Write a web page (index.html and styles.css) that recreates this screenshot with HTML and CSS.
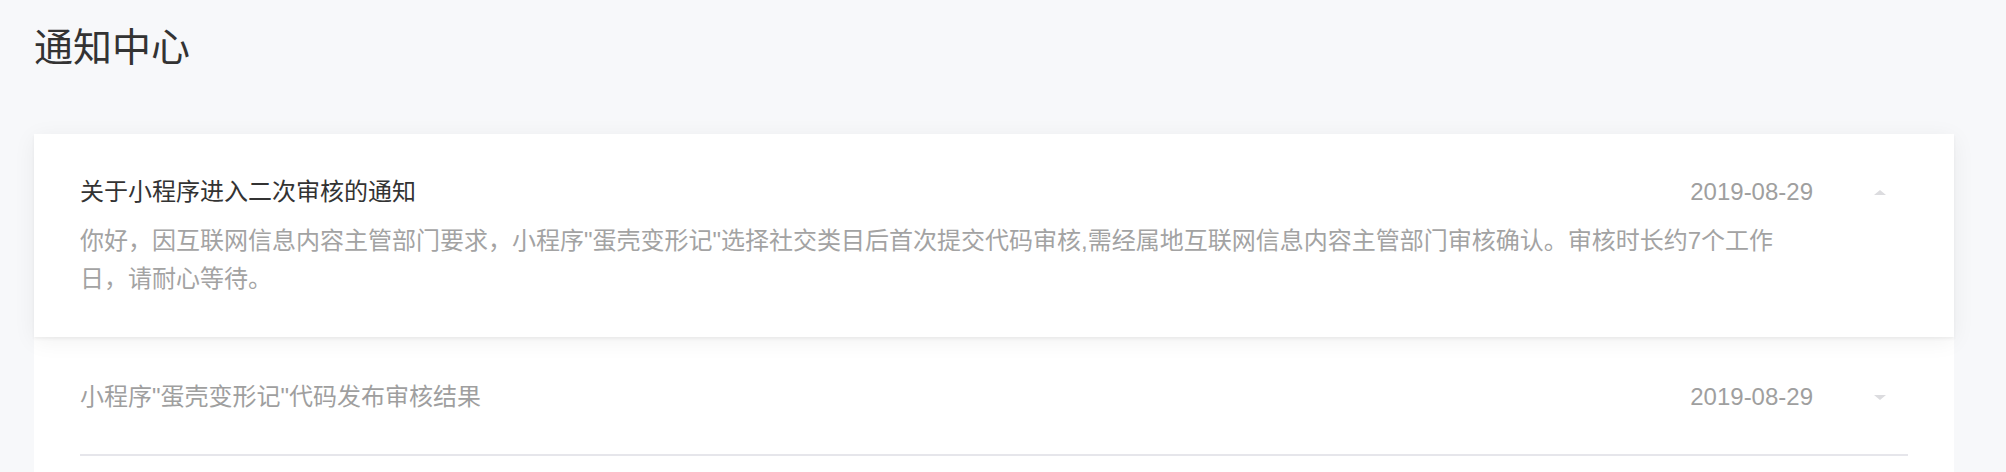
FILE: index.html
```html
<!DOCTYPE html>
<html lang="zh-CN">
<head>
    <meta charset="UTF-8">
    <meta name="viewport" content="width=device-width, initial-scale=1.0">
    <title>通知中心</title>
    <link rel="stylesheet" href="styles.css">
</head>
<body>

<div class="page">
    <h1 class="page-title">通知中心</h1>

    <div class="notice-list">
        <div class="notice open">
            <div class="notice-head">
                <span class="notice-title">关于小程序进入二次审核的通知</span>
                <span class="notice-date">2019-08-29</span>
                <span class="notice-arrow"><i class="arrow up"></i></span>
            </div>
            <p class="notice-body">你好，因互联网信息内容主管部门要求，小程序"蛋壳变形记"选择社交类目后首次提交代码审核,需经属地互联网信息内容主管部门审核确认。审核时长约7个工作日，请耐心等待。</p>
        </div>

        <div class="notice">
            <div class="notice-head">
                <span class="notice-title">小程序"蛋壳变形记"代码发布审核结果</span>
                <span class="notice-date">2019-08-29</span>
                <span class="notice-arrow"><i class="arrow down"></i></span>
            </div>
        </div>
    </div>
</div>

</body>
</html>
```

FILE: styles.css
```css
* {
    margin: 0;
    padding: 0;
    box-sizing: border-box;
}

html, body {
    height: 100%;
    overflow: hidden;
}

body {
    background-color: #f7f8fa;
    font-family: "Liberation Sans", "Noto Sans CJK SC", sans-serif;
    color: #333;
}

.page {
    padding: 20px 52px 0 34px;
}

.page-title {
    font-size: 39px;
    font-weight: normal;
    line-height: 55px;
    color: #333;
    margin-bottom: 59px;
}

.notice-list {
    background-color: white;
    padding-bottom: 60px;
}

.notice {
    padding: 0 46px;
    background-color: white;
}

.notice.open {
    position: relative;
    z-index: 1;
    padding-top: 41px;
    padding-bottom: 39px;
    box-shadow: 0 2px 3px rgba(0, 0, 0, 0.05), 0 4px 22px rgba(0, 0, 0, 0.06);
}

.notice:not(.open) .notice-head {
    padding: 43px 0 40px;
    border-bottom: 2px solid #e6e6eb;
}

.notice-head {
    display: flex;
    align-items: center;
    line-height: 34px;
}

.notice-title {
    flex: 1;
    font-size: 24px;
    color: #9f9f9f;
}

.open .notice-title {
    color: #333;
}

.notice-date {
    font-size: 24px;
    color: #9f9f9f;
}

.notice-arrow {
    width: 56px;
    margin-left: 39px;
    display: flex;
    justify-content: center;
}

.arrow {
    width: 0;
    height: 0;
    border-left: 6px solid transparent;
    border-right: 6px solid transparent;
}

.arrow.up {
    border-bottom: 5px solid #dcdcdf;
}

.arrow.down {
    border-top: 5px solid #dcdcdf;
}

.notice-body {
    margin-top: 13px;
    margin-right: 120px;
    font-size: 24px;
    line-height: 38px;
    color: #a3a3a3;
}
```
